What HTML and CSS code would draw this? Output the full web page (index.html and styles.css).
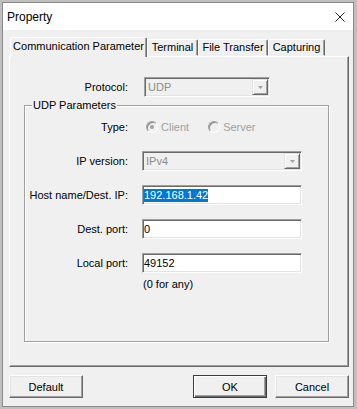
FILE: index.html
```html
<!DOCTYPE html>
<html lang="en">
<head>
    <meta charset="UTF-8">
    <title>Property</title>
    <link rel="stylesheet" href="styles.css">
</head>
<body>
    <div class="window">
        <!-- Title bar -->
        <div class="titlebar">
            <span>Property</span>
            <svg class="close" width="10" height="10" viewBox="0 0 10 10">
                <path d="M0.5 0.5 L9.5 9.5 M9.5 0.5 L0.5 9.5" stroke="#222" stroke-width="1" fill="none"/>
            </svg>
        </div>

        <div class="client">
            <!-- Tabs -->
            <div class="tabs">
                <div class="tab active" style="width:137px">Communication Parameter</div>
                <div class="tab" style="width:51px">Terminal</div>
                <div class="tab" style="width:70px">File Transfer</div>
                <div class="tab" style="width:57px">Capturing</div>
            </div>

            <!-- Tab page -->
            <div class="page">
                <div class="row protocol">
                    <span class="label">Protocol:</span>
                    <div class="combo sunken" style="width:126px">
                        <span>UDP</span>
                        <span class="drop"><svg width="5" height="3" viewBox="0 0 5 3"><path d="M0 0 H5 L2.5 3 Z" fill="#a0a0a0"/></svg></span>
                    </div>
                </div>

                <div class="group">
                    <span class="group-title">UDP Parameters</span>

                    <div class="row">
                        <span class="label">Type:</span>
                        <span class="radio on"><i></i>Client</span>
                        <span class="radio second"><i></i>Server</span>
                    </div>
                    <div class="row">
                        <span class="label">IP version:</span>
                        <div class="combo sunken" style="width:160px">
                            <span>IPv4</span>
                            <span class="drop"><svg width="5" height="3" viewBox="0 0 5 3"><path d="M0 0 H5 L2.5 3 Z" fill="#a0a0a0"/></svg></span>
                        </div>
                    </div>
                    <div class="row">
                        <span class="label">Host name/Dest. IP:</span>
                        <div class="field sunken"><span class="sel">192.168.1.42</span></div>
                    </div>
                    <div class="row">
                        <span class="label">Dest. port:</span>
                        <div class="field sunken">0</div>
                    </div>
                    <div class="row">
                        <span class="label">Local port:</span>
                        <div class="field sunken">49152</div>
                    </div>
                    <div class="note">(0 for any)</div>
                </div>
            </div>

            <!-- Dialog buttons -->
            <div class="buttons">
                <button class="btn">Default</button>
                <button class="btn default ok">OK</button>
                <button class="btn">Cancel</button>
            </div>
        </div>
    </div>
</body>
</html>
```

FILE: styles.css
```css
/* General page styling */
* {
    box-sizing: border-box;
}

body {
    margin: 0;
    background: #bfbfbf;
    font-family: "Liberation Sans", Arial, sans-serif;
    font-size: 11px;
    color: #000;
}

/* Dialog window */
.window {
    margin: 2px 0 0 2px;
    width: 352px;
    height: 405px;
    border: 1px solid #8a8a8a;
    background: #f0f0f0;
    display: flex;
    flex-direction: column;
}

.titlebar {
    height: 27px;
    flex-shrink: 0;
    background: #fff;
    display: flex;
    align-items: center;
    justify-content: space-between;
    padding: 0 8px 0 4px;
    font-size: 12px;
}

.client {
    flex: 1;
    padding: 0 4px 0 6px;
}

/* Tabs */
.tabs {
    display: flex;
    align-items: flex-end;
    height: 26px;
    padding-top: 7px;
}

.tab {
    height: 17px;
    line-height: 15px;
    text-align: center;
    white-space: nowrap;
    border: 1px solid;
    border-color: #fff #696969 transparent #fff;
    border-radius: 2px 2px 0 0;
    box-shadow: inset -1px 0 0 #a0a0a0;
}

.tab.active {
    height: 20px;
    margin-left: 1px;
    margin-bottom: -1px;
    padding-top: 1px;
    line-height: 14px;
    border-bottom: none;
    background: #f0f0f0;
    position: relative;
    z-index: 1;
}

/* Tab page */
.page {
    height: 311px;
    border: 1px solid;
    border-color: #fff #696969 #696969 #fff;
    box-shadow: inset -1px -1px 0 #a0a0a0;
    padding-top: 20px;
}

.row {
    display: flex;
    align-items: center;
    height: 20px;
}

.label {
    width: 103px;
    margin-right: 14px;
    text-align: right;
    white-space: nowrap;
}

.protocol .label {
    width: 118px;
    margin-right: 16px;
}

/* Group box */
.group {
    position: relative;
    margin: 8px 0 0 14px;
    width: 305px;
    height: 237px;
    border: 1px solid #a0a0a0;
    box-shadow: 1px 1px 0 #fff, inset 1px 1px 0 #fff;
    padding-top: 11px;
}

.group .row + .row {
    margin-top: 14px;
}

.group-title {
    position: absolute;
    top: -7px;
    left: 7px;
    padding: 0 1px;
    line-height: 13px;
    background: #f0f0f0;
}

.note {
    margin-top: 5px;
    padding-left: 118px;
}

/* 3D sunken edit look */
.sunken {
    border: 1px solid;
    border-color: #a0a0a0 #fff #fff #a0a0a0;
    box-shadow: inset 1px 1px 0 #696969, inset -1px -1px 0 #e3e3e3;
}

.combo {
    height: 20px;
    display: flex;
    align-items: center;
    justify-content: space-between;
    padding: 0 1px 0 3px;
    color: #8c8c8c;
    background: #f0f0f0;
}

.drop {
    width: 16px;
    height: 16px;
    display: flex;
    align-items: center;
    justify-content: center;
    border: 1px solid;
    border-color: #e3e3e3 #696969 #696969 #e3e3e3;
    box-shadow: inset 1px 1px 0 #fff, inset -1px -1px 0 #a0a0a0;
}

.field {
    width: 160px;
    height: 20px;
    display: flex;
    align-items: center;
    padding-left: 1px;
    background: #fff;
}

.sel {
    background: #0078d7;
    color: #fff;
    line-height: 13px;
}

/* Radio buttons (disabled) */
.radio {
    display: flex;
    align-items: center;
    margin-left: 4px;
    color: #a0a0a0;
}

.radio.second {
    margin-left: 19px;
}

.radio i {
    position: relative;
    width: 12px;
    height: 12px;
    margin-right: 3px;
    border-radius: 50%;
    border: 1px solid;
    border-color: #a0a0a0 #fff #fff #a0a0a0;
    box-shadow: inset 1px 1px 0 #8a8a8a;
    background: #f0f0f0;
}

.radio.on i::after {
    content: "";
    position: absolute;
    left: 3px;
    top: 3px;
    width: 4px;
    height: 4px;
    border-radius: 50%;
    background: #a0a0a0;
}

/* Button styling */
.buttons {
    display: flex;
    margin-top: 8px;
}

.btn {
    width: 74px;
    height: 23px;
    padding: 0;
    font: inherit;
    color: #000;
    background: #f0f0f0;
    border: 1px solid;
    border-color: #fff #696969 #696969 #fff;
    box-shadow: inset -1px -1px 0 #a0a0a0, inset 1px 1px 0 #e3e3e3;
}

.btn.default {
    border-color: #3c3c3c;
    box-shadow: inset 1px 1px 0 #fff, inset -1px -1px 0 #696969, inset -2px -2px 0 #a0a0a0;
}

.btn.ok {
    margin-left: auto;
    margin-right: 8px;
}
```
